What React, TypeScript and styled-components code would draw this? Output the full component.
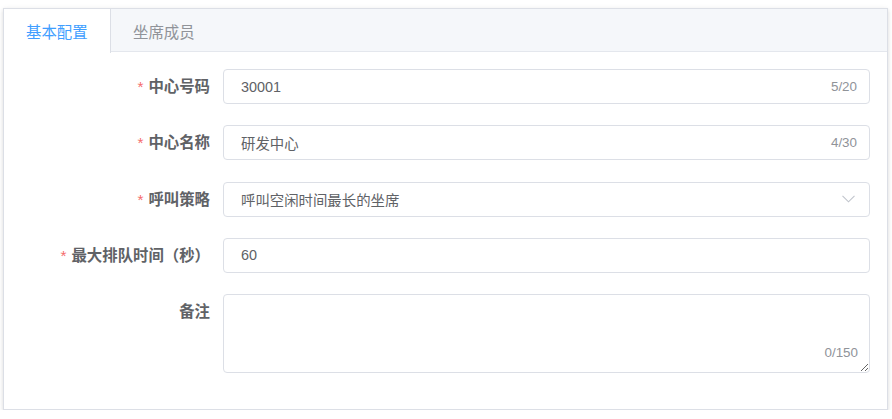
import React, { useState } from "react";
import { styled, createGlobalStyle } from "styled-components";

const GlobalStyle = createGlobalStyle`
  html, body {
    margin: 0;
    padding: 0;
    background: #ffffff;
  }
  body {
    font-family: "Liberation Sans", "Noto Sans CJK SC", sans-serif;
  }
  * {
    box-sizing: border-box;
  }
`;

const Page = styled.div`
  padding: 8px 4px 0 3px;
`;

const Card = styled.div`
  width: 885px;
  border: 1px solid #dcdfe6;
  background: #ffffff;
  box-shadow: 0 2px 4px rgba(0, 0, 0, 0.12), 0 0 6px rgba(0, 0, 0, 0.04);
`;

const TabHeader = styled.div`
  display: flex;
  height: 43px;
  background: #f5f7fa;
  border-bottom: 1px solid #e4e7ed;
`;

const Tab = styled.div<{ $active?: boolean }>`
  padding: 0 22.5px 0 22px;
  display: flex;
  align-items: center;
  font-size: 15.4px;
  cursor: pointer;
  color: ${(p) => (p.$active ? "#409eff" : "#909399")};
  background: ${(p) => (p.$active ? "#ffffff" : "transparent")};
  border-right: 1px solid ${(p) => (p.$active ? "#dcdfe6" : "transparent")};
  margin-bottom: ${(p) => (p.$active ? "-1px" : "0")};
  height: ${(p) => (p.$active ? "44px" : "43px")};
`;

const Content = styled.div`
  padding: 17px 17px 16.5px 16px;
`;

const Form = styled.div`
  display: flex;
  flex-direction: column;
  gap: 21.05px;
  padding-bottom: 20px;
`;

const Row = styled.div`
  display: grid;
  grid-template-columns: 203px 1fr;
  align-items: start;
`;

const Label = styled.label`
  padding-right: 13px;
  text-align: right;
  font-size: 15.4px;
  font-weight: 700;
  line-height: 35.2px;
  color: #606266;
`;

const Star = styled.span`
  color: #f56c6c;
  font-weight: 400;
  margin-right: 5px;
`;

const Field = styled.div`
  position: relative;
  height: 35.2px;
  border: 1px solid #dcdfe6;
  border-radius: 4px;
  background: #ffffff;
  display: flex;
  align-items: center;
  padding: 0 12px 0 17px;
  cursor: text;
`;

const Input = styled.input`
  flex: 1;
  min-width: 0;
  border: none;
  outline: none;
  padding: 0;
  font-family: inherit;
  font-size: 14.4px;
  color: #606266;
  background: transparent;
`;

const Count = styled.span`
  font-size: 13.4px;
  color: #909399;
  margin-left: 8px;
`;

const Arrow = styled.svg`
  width: 13px;
  height: 8px;
  margin-right: 2px;
  flex-shrink: 0;
`;

const AreaWrap = styled.div`
  position: relative;
  height: 78.6px;
`;

const TextArea = styled.textarea`
  width: 100%;
  height: 78.6px;
  display: block;
  border: 1px solid #dcdfe6;
  border-radius: 4px;
  padding: 6px 17px;
  font-family: inherit;
  font-size: 14.4px;
  color: #606266;
  resize: vertical;
  outline: none;
`;

const AreaCount = styled.span`
  position: absolute;
  right: 12px;
  bottom: 13px;
  font-size: 13.4px;
  color: #909399;
  background: #ffffff;
`;

export default function App() {
  const [tab, setTab] = useState(0);
  const [code, setCode] = useState("30001");
  const [name, setName] = useState("研发中心");
  const [wait, setWait] = useState("60");
  const [note, setNote] = useState("");

  return (
    <Page>
      <GlobalStyle />
      <Card>
        <TabHeader>
          <Tab $active={tab === 0} onClick={() => setTab(0)}>
            基本配置
          </Tab>
          <Tab $active={tab === 1} onClick={() => setTab(1)}>
            坐席成员
          </Tab>
        </TabHeader>
        <Content>
          <Form>
            <Row>
              <Label>
                <Star>*</Star>中心号码
              </Label>
              <Field>
                <Input value={code} maxLength={20} onChange={(e) => setCode(e.target.value)} />
                <Count>{code.length}/20</Count>
              </Field>
            </Row>
            <Row>
              <Label>
                <Star>*</Star>中心名称
              </Label>
              <Field>
                <Input value={name} maxLength={30} onChange={(e) => setName(e.target.value)} />
                <Count>{name.length}/30</Count>
              </Field>
            </Row>
            <Row>
              <Label>
                <Star>*</Star>呼叫策略
              </Label>
              <Field>
                <Input value="呼叫空闲时间最长的坐席" readOnly />
                <Arrow viewBox="0 0 13 8">
                  <path d="M0.5 0.8 L6.5 6.8 L12.5 0.8" fill="none" stroke="#c0c4cc" strokeWidth="1.1" />
                </Arrow>
              </Field>
            </Row>
            <Row>
              <Label>
                <Star>*</Star>最大排队时间（秒）
              </Label>
              <Field>
                <Input value={wait} onChange={(e) => setWait(e.target.value)} />
              </Field>
            </Row>
            <Row>
              <Label>备注</Label>
              <AreaWrap>
                <TextArea value={note} maxLength={150} onChange={(e) => setNote(e.target.value)} />
                <AreaCount>{note.length}/150</AreaCount>
              </AreaWrap>
            </Row>
          </Form>
        </Content>
      </Card>
    </Page>
  );
}
